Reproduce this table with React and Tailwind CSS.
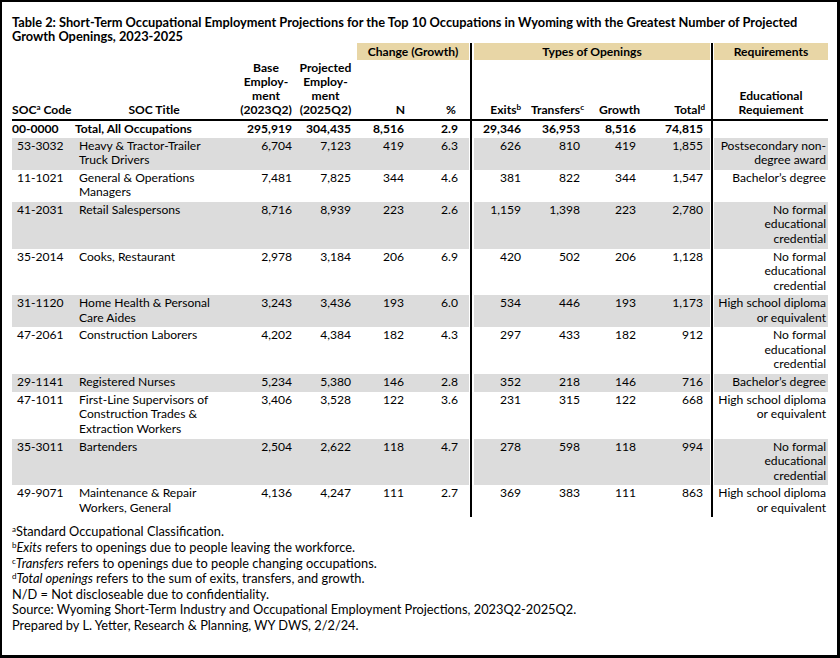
import React from "react";

const NF = ["No formal", "educational", "credential"];
const HS = ["High school diploma", "or equivalent"];
const rows = [
  ["53-3032", ["Heavy & Tractor-Trailer", "Truck Drivers"], "6,704", "7,123", "419", "6.3", "626", "810", "419", "1,855", ["Postsecondary non-", "degree award"], true],
  ["11-1021", ["General & Operations", "Managers"], "7,481", "7,825", "344", "4.6", "381", "822", "344", "1,547", ["Bachelor’s degree"], false],
  ["41-2031", ["Retail Salespersons"], "8,716", "8,939", "223", "2.6", "1,159", "1,398", "223", "2,780", NF, true],
  ["35-2014", ["Cooks, Restaurant"], "2,978", "3,184", "206", "6.9", "420", "502", "206", "1,128", NF, false],
  ["31-1120", ["Home Health & Personal", "Care Aides"], "3,243", "3,436", "193", "6.0", "534", "446", "193", "1,173", HS, true],
  ["47-2061", ["Construction Laborers"], "4,202", "4,384", "182", "4.3", "297", "433", "182", "912", NF, false],
  ["29-1141", ["Registered Nurses"], "5,234", "5,380", "146", "2.8", "352", "218", "146", "716", ["Bachelor’s degree"], true],
  ["47-1011", ["First-Line Supervisors of", "Construction Trades &", "Extraction Workers"], "3,406", "3,528", "122", "3.6", "231", "315", "122", "668", HS, false],
  ["35-3011", ["Bartenders"], "2,504", "2,622", "118", "4.7", "278", "598", "118", "994", NF, true],
  ["49-9071", ["Maintenance & Repair", "Workers, General"], "4,136", "4,247", "111", "2.7", "369", "383", "111", "863", HS, false],
];

function Sep() {
  return (
    <div className="w-[5px] shrink-0 flex pl-[1px] bg-white">
      <div className="w-[2px] bg-black" />
    </div>
  );
}
function Sep2() {
  return (
    <div className="w-[4px] shrink-0 flex pl-[1px] bg-white">
      <div className="w-[2px] bg-black" />
    </div>
  );
}

function Lines({ items }) {
  return items.map((t, i) => <div key={i} className="whitespace-nowrap">{t}</div>);
}

function Row({ r }) {
  const [code, title, base, proj, n, pct, exits, trans, growth, total, req, gray] = r;
  const bg = gray ? "bg-[#dcdcdc]" : "bg-white";
  return (
    <div className="flex">
      <div className={`flex w-[457px] pt-[1px] pb-[2.2px] ${bg}`}>
        <div className="w-[60px] pl-[5px]">{code}</div>
        <div className="w-[164px] pl-[7px]"><Lines items={title} /></div>
        <div className="w-[60px] text-right pr-[4px]">{base}</div>
        <div className="w-[59px] text-right pr-[4px]">{proj}</div>
        <div className="w-[53px] text-right pr-[4px]">{n}</div>
        <div className="w-[61px] text-right pr-[11px]">{pct}</div>
      </div>
      <Sep />
      <div className={`flex w-[236px] pt-[1px] pb-[2.2px] ${bg}`}>
        <div className="w-[50px] text-right pr-[3px]">{exits}</div>
        <div className="w-[60px] text-right pr-[4px]">{trans}</div>
        <div className="w-[56px] text-right pr-[4px]">{growth}</div>
        <div className="w-[70px] text-right pr-[7px]">{total}</div>
      </div>
      <Sep2 />
      <div className={`w-[114px] text-right pr-[2px] pt-[1px] pb-[2.2px] ${bg}`}>
        <Lines items={req} />
      </div>
    </div>
  );
}

export default function App() {
  return (
    <div className="w-[840px] h-[658px] bg-white border-t-2 border-l-2 border-r-[3px] border-b-[3px] border-black pl-[10px] pr-[9px] text-black font-['Lato','Liberation_Sans',sans-serif] text-[12.1px] leading-[14.5px] overflow-hidden">
      <div className="pt-[13px] font-bold text-[12.8px] leading-[14px] whitespace-nowrap">
        <div>Table 2: Short-Term Occupational Employment Projections for the Top 10 Occupations in Wyoming with the Greatest Number of Projected</div>
        <div>Growth Openings, 2023-2025</div>
      </div>
      {/* header band row */}
      <div className="flex font-bold leading-[17px]">
        <div className="flex w-[457px]">
          <div className="w-[345px]" />
          <div className="w-[112px] bg-[#e8d6a6] text-center">Change (Growth)</div>
        </div>
        <Sep />
        <div className="w-[236px] bg-[#e8d6a6] text-center">Types of Openings</div>
        <Sep2 />
        <div className="w-[114px] bg-[#e8d6a6] text-center">Requirements</div>
      </div>
      {/* header labels */}
      <div className="flex font-bold leading-[14px]">
        <div className="flex w-[457px] items-end pb-[2px] pt-[1px]">
          <div className="w-[60px] whitespace-nowrap">SOC<sup className="text-[8px]">a</sup> Code</div>
          <div className="w-[164px] text-center">SOC Title</div>
          <div className="w-[60px] text-center"><Lines items={["Base", "Employ-", "ment", "(2023Q2)"]} /></div>
          <div className="w-[59px] text-center"><Lines items={["Projected", "Employ-", "ment", "(2025Q2)"]} /></div>
          <div className="w-[53px] text-right pr-[3px]">N</div>
          <div className="w-[61px] text-right pr-[13px]">%</div>
        </div>
        <Sep />
        <div className="flex w-[236px] items-end pb-[2px]">
          <div className="w-[50px] text-right pr-[3px]">Exits<sup className="text-[8px]">b</sup></div>
          <div className="w-[60px] text-right">Transfers<sup className="text-[8px]">c</sup></div>
          <div className="w-[56px] text-right pr-[0px]">Growth</div>
          <div className="w-[70px] text-right pr-[5px]">Total<sup className="text-[8px]">d</sup></div>
        </div>
        <Sep2 />
        <div className="w-[114px] flex items-end justify-center pb-[2px]">
          <div className="text-center"><Lines items={["Educational", "Requiement"]} /></div>
        </div>
      </div>
      <div className="h-[2px] bg-black" />
      {/* total row */}
      <div className="flex font-bold">
        <div className="flex w-[457px] pt-[1px] pb-[1px]">
          <div className="w-[60px]">00-0000</div>
          <div className="w-[164px] pl-[3px] whitespace-nowrap">Total, All Occupations</div>
          <div className="w-[60px] text-right pr-[4px]">295,919</div>
          <div className="w-[59px] text-right pr-[4px]">304,435</div>
          <div className="w-[53px] text-right pr-[4px]">8,516</div>
          <div className="w-[61px] text-right pr-[11px]">2.9</div>
        </div>
        <Sep />
        <div className="flex w-[236px] pt-[1px] pb-[1px]">
          <div className="w-[50px] text-right pr-[3px]">29,346</div>
          <div className="w-[60px] text-right pr-[4px]">36,953</div>
          <div className="w-[56px] text-right pr-[4px]">8,516</div>
          <div className="w-[70px] text-right pr-[7px]">74,815</div>
        </div>
        <Sep2 />
        <div className="w-[114px]" />
      </div>
      {rows.map((r) => (
        <Row key={r[0]} r={r} />
      ))}
      <div className="mt-[7px] text-[12.8px] leading-[15.6px]">
        <div><sup className="text-[8px]">a</sup>Standard Occupational Classification.</div>
        <div><sup className="text-[8px]">b</sup><i>Exits</i> refers to openings due to people leaving the workforce.</div>
        <div><sup className="text-[8px]">c</sup><i>Transfers</i> refers to openings due to people changing occupations.</div>
        <div><sup className="text-[8px]">d</sup><i>Total openings</i> refers to the sum of exits, transfers, and growth.</div>
        <div>N/D = Not discloseable due to confidentiality.</div>
        <div>Source: Wyoming Short-Term Industry and Occupational Employment Projections, 2023Q2-2025Q2.</div>
        <div>Prepared by L. Yetter, Research &amp; Planning, WY DWS, 2/2/24.</div>
      </div>
    </div>
  );
}
